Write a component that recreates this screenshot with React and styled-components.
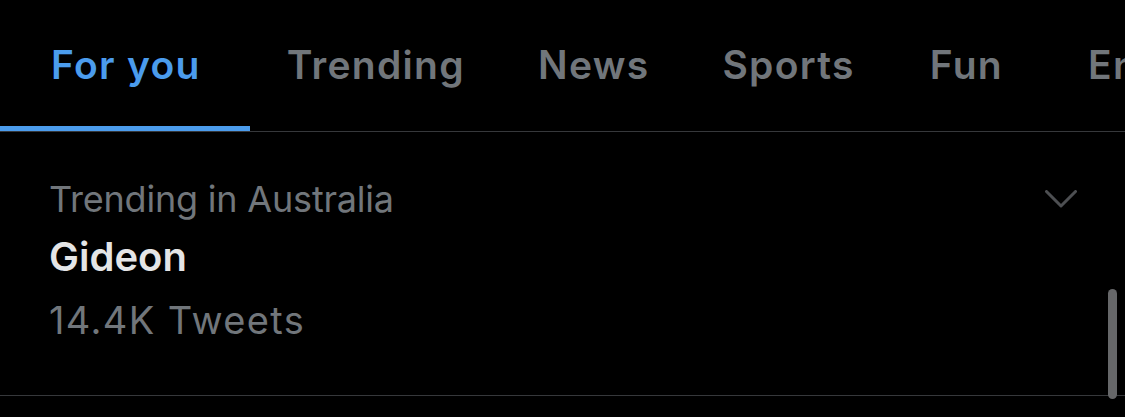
import styled, { createGlobalStyle } from 'styled-components';

const GlobalStyle = createGlobalStyle`
  html, body {
    margin: 0;
    padding: 0;
    background: #000;
  }
  body {
    font-family: Inter, "Liberation Sans", Arial, sans-serif;
    -webkit-font-smoothing: antialiased;
  }
`;

const Page = styled.div`
  position: relative;
  width: 1125px;
  height: 417px;
  overflow: hidden;
  background: #000;
`;

const TabBar = styled.nav`
  display: flex;
  align-items: stretch;
  height: 131px;
  border-bottom: 1px solid #36383b;
  white-space: nowrap;
  overflow: hidden;
`;

const Tab = styled.div`
  flex: none;
  display: flex;
  align-items: flex-start;
  box-sizing: border-box;
  padding: 41px ${({ $right }) => $right}px 0 ${({ $left }) => $left}px;
  font-size: 39px;
  font-weight: 600;
  letter-spacing: 1.3px;
  line-height: 48px;
  color: ${({ $active }) => ($active ? '#4b9ced' : '#71767b')};
  border-bottom: 5px solid ${({ $active }) => ($active ? '#4b9ced' : 'transparent')};
`;

const TrendRow = styled.div`
  display: flex;
  justify-content: space-between;
  align-items: flex-start;
  padding: 45px 48px 51px 49px;
  border-bottom: 1px solid #36383b;
`;

const TrendBody = styled.div`
  display: flex;
  flex-direction: column;
`;

const Context = styled.div`
  font-size: 36px;
  line-height: 44px;
  color: #71767b;
  letter-spacing: -0.2px;
`;

const Topic = styled.div`
  margin-top: 11px;
  font-size: 40px;
  line-height: 50px;
  font-weight: 600;
  color: #e4e5e6;
`;

const Count = styled.div`
  margin-top: 14px;
  font-size: 38px;
  line-height: 48px;
  color: #71767b;
  letter-spacing: 1.4px;
`;

const Caret = styled.svg`
  margin-top: 13px;
  flex: none;
`;

const ScrollThumb = styled.div`
  position: absolute;
  right: 8px;
  top: 289px;
  width: 9px;
  height: 110px;
  border-radius: 5px;
  background: #666769;
`;

const tabs = [
  { label: 'For you', left: 51, right: 49, active: true },
  { label: 'Trending', left: 37, right: 35 },
  { label: 'News', left: 38, right: 36 },
  { label: 'Sports', left: 37, right: 38 },
  { label: 'Fun', left: 37, right: 42 },
  { label: 'Entertainment', left: 43, right: 37 },
];

export default function App() {
  return (
    <Page>
      <GlobalStyle />
      <TabBar>
        {tabs.map((t) => (
          <Tab key={t.label} $left={t.left} $right={t.right} $active={t.active}>
            {t.label}
          </Tab>
        ))}
      </TabBar>
      <TrendRow>
        <TrendBody>
          <Context>Trending in Australia</Context>
          <Topic>Gideon</Topic>
          <Count>14.4K Tweets</Count>
        </TrendBody>
        <Caret width="32" height="18" viewBox="0 0 32 18" fill="none">
          <path d="M1.5 1.5 L16 16 L30.5 1.5" stroke="#4d4f52" strokeWidth="3" strokeLinecap="round" strokeLinejoin="round" />
        </Caret>
      </TrendRow>
      <ScrollThumb />
    </Page>
  );
}
